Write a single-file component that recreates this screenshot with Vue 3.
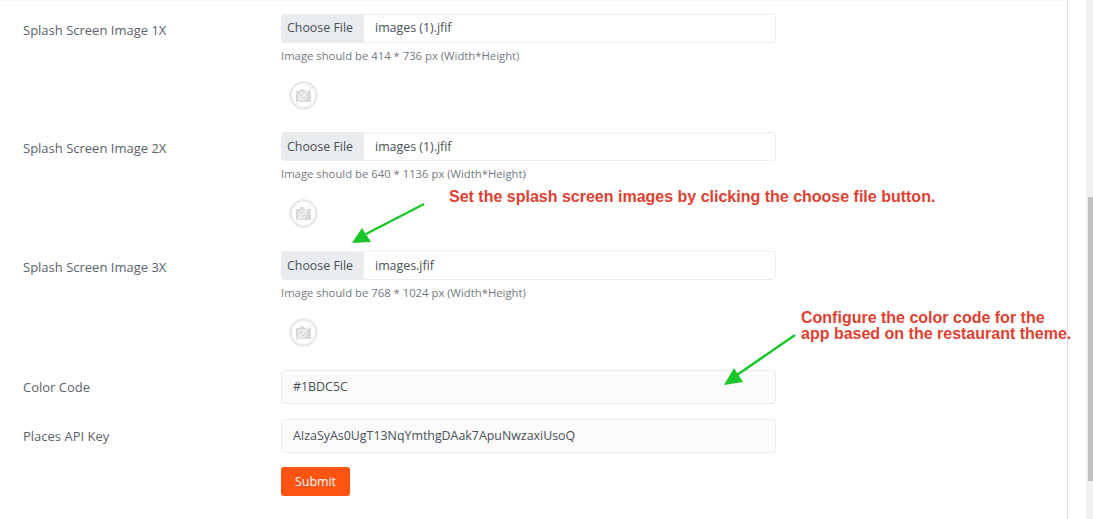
<template>
  <div class="page">
    <div class="content">
      <form class="form" @submit.prevent>
        <div v-for="s in splash" :key="s.label" class="row file-row">
          <label class="lbl">{{ s.label }}</label>
          <div class="field">
            <div class="file-box">
              <span class="file-btn">Choose File</span>
              <span class="file-name">{{ s.file }}</span>
            </div>
            <div class="hint">{{ s.hint }}</div>
            <div class="thumb">
              <svg width="29" height="29" viewBox="0 0 29 29" fill="none">
                <circle cx="14.5" cy="14.5" r="13" stroke="#e9e9e9" stroke-width="2.5" />
                <path d="M7 10h3.500l1-2h3l1 2H22v11H7z" fill="#d9d9d9" />
                <circle cx="13.500" cy="15.500" r="3.500" stroke="#f5f5f5" stroke-width="1.200" />
                <path d="M6 24L23 5" stroke="#f1f1f1" stroke-width="1.600" />
              </svg>
            </div>
          </div>
        </div>

        <div class="row text-row">
          <label class="lbl">Color Code</label>
          <div class="field"><div class="text-box">#1BDC5C</div></div>
        </div>
        <div class="row text-row">
          <label class="lbl">Places API Key</label>
          <div class="field"><div class="text-box">AIzaSyAs0UgT13NqYmthgDAak7ApuNwzaxiUsoQ</div></div>
        </div>
        <div class="row">
          <span class="lbl"></span>
          <div class="field"><button class="submit" type="submit">Submit</button></div>
        </div>
      </form>

      <div class="note note-1">Set the splash screen images by clicking the choose file button.</div>
      <div class="note note-2">Configure the color code for the<br />app based on the restaurant theme.</div>

      <svg class="arrows" width="1093" height="519" viewBox="0 0 1093 519" fill="none">
        <path d="M424 204L366 234" stroke="#1bc62a" stroke-width="2.500" />
        <path d="M352 243L362 228L371 242z" fill="#1bc62a" />
        <path d="M795 335L737 375" stroke="#1bc62a" stroke-width="2.500" />
        <path d="M724 385L734 368L743 382z" fill="#1bc62a" />
      </svg>
    </div>
    <div class="scrollbar"><div class="scroll-thumb"></div></div>
  </div>
</template>

<script setup>
const splash = [
  { label: 'Splash Screen Image 1X', file: 'images (1).jfif', hint: 'Image should be 414 * 736 px (Width*Height)' },
  { label: 'Splash Screen Image 2X', file: 'images (1).jfif', hint: 'Image should be 640 * 1136 px (Width*Height)' },
  { label: 'Splash Screen Image 3X', file: 'images.jfif', hint: 'Image should be 768 * 1024 px (Width*Height)' },
]
</script>

<style>
html,
body {
  margin: 0;
  background: #fff;
  overflow: hidden;
}
</style>

<style scoped>
* {
  box-sizing: border-box;
}
.page {
  width: 1093px;
  height: 519px;
  display: flex;
  overflow: hidden;
  background: #fff;
  font-family: 'Open Sans', 'Noto Sans', sans-serif;
  color: #5b626b;
  font-size: 12.4px;
}
.content {
  position: relative;
  z-index: 1;
  width: 1068px;
  border-right: 1px solid #dedede;
  border-top: 1px solid #f6f6f6;
}
.form {
  padding: 12.9px 0 0 23px;
}
.row {
  display: flex;
}
.lbl {
  width: 258px;
  flex-shrink: 0;
  padding-top: 2px;
  line-height: 29px;
  font-size: 13px;
  color: #5b626b;
}
.field {
  width: 495px;
}
.file-row {
  height: 119px;
}
.file-row:first-child {
  height: 118.5px;
}
.file-box {
  height: 29px;
  display: flex;
  align-items: center;
  border: 1px solid #ebedf0;
  border-radius: 3px;
  overflow: hidden;
}
.file-btn {
  width: 82px;
  height: 100%;
  padding-bottom: 1px;
  background: #e9ecef;
  color: #495057;
  display: flex;
  align-items: center;
  padding-left: 5px;
}
.file-name {
  padding-left: 11px;
  padding-bottom: 1px;
  color: #495057;
}
.hint {
  margin-top: 4px;
  line-height: 17px;
  font-size: 11.3px;
  color: #73797f;
}
.thumb {
  margin: 17px 0 0 8px;
  height: 29px;
  filter: blur(0.3px);
}
.text-row {
  height: 48.5px;
}
.text-row .lbl {
  padding-top: 0;
  line-height: 34px;
}
.text-box {
  height: 34px;
  line-height: 32px;
  padding-left: 11px;
  background: #fbfbfb;
  border: 1px solid #ebebeb;
  border-radius: 3px;
  color: #495057;
}
.submit {
  display: block;
  width: 69px;
  height: 29px;
  background: #ff5312;
  color: #fff;
  border: none;
  border-radius: 3px;
  font-family: inherit;
  font-size: 12.4px;
  font-weight: 500;
}
.note {
  position: absolute;
  font-family: 'Liberation Sans', Arial, sans-serif;
  font-weight: 700;
  color: #e04030;
  font-size: 16px;
  line-height: 16px;
  white-space: nowrap;
}
.note-1 {
  left: 449px;
  top: 187.500px;
}
.note-2 {
  left: 801px;
  top: 309px;
}
.arrows {
  position: absolute;
  left: 0;
  top: -1px;
  pointer-events: none;
}
.scrollbar {
  position: relative;
  width: 25px;
  background: linear-gradient(to right, #fff 18px, #f1f1f1 18px);
}
.scroll-thumb {
  position: absolute;
  left: 20px;
  top: 197px;
  width: 5px;
  height: 284px;
  background: #c1c1c1;
}
</style>
